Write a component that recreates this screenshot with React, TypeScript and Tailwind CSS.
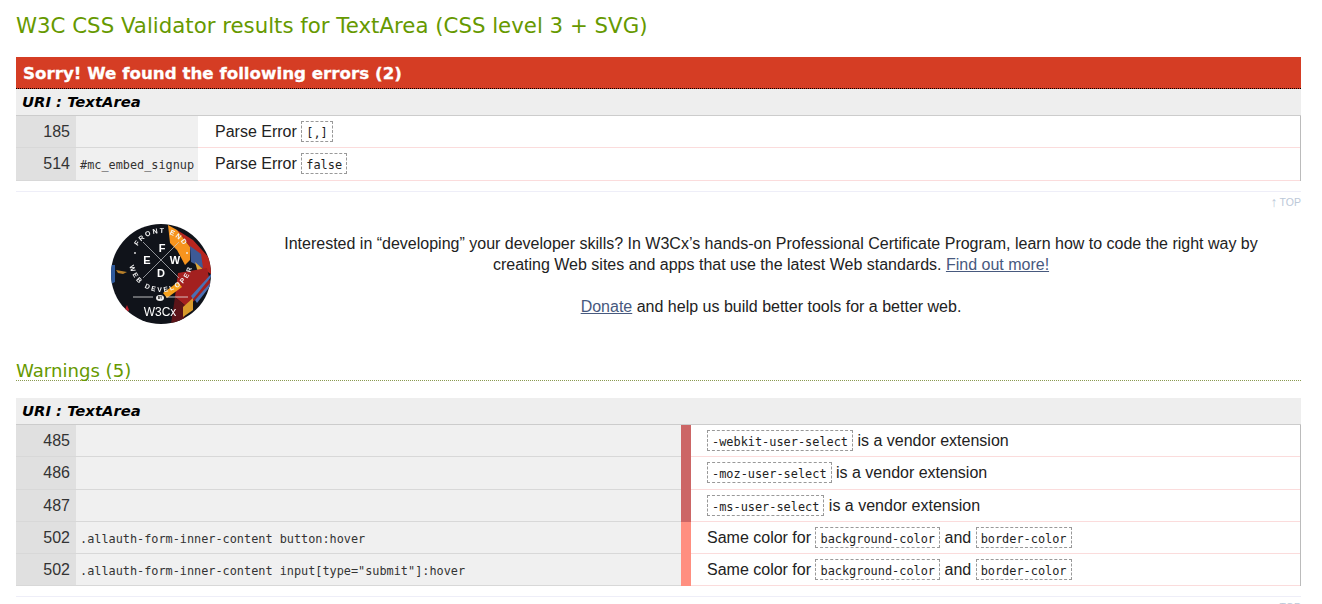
import React from "react";

const sans = "font-['Liberation_Sans',Arial,sans-serif]";
const verdana = "font-['DejaVu_Sans',Verdana,sans-serif]";
const mono = "font-['DejaVu_Sans_Mono',monospace]";

function Code({ children }: { children: React.ReactNode }) {
    return (
        <span className={`${mono} inline-block h-[21px] border border-dashed border-[#999] px-[4px] text-[11.9px] leading-[22px] text-[#222] align-[0px]`}>
            {children}
        </span>
    );
}

function UriRow() {
    return (
        <div className={`${verdana} h-[27px] border-b border-[#ccc] bg-[#eee] pl-[6px] text-[14.8px] leading-[26px] font-bold italic text-black`}>
            URI : TextArea
        </div>
    );
}

function Row({
    line,
    context,
    contextWidth,
    level,
    tall,
    children,
}: {
    line: string;
    context?: string;
    contextWidth: string;
    level?: string;
    tall?: boolean;
    children: React.ReactNode;
}) {
    return (
        <div className={`${tall ? "h-[33px]" : "h-[32px]"} flex border-r border-r-[#bbb]`}>
            <div className="w-[60px] shrink-0 border-b border-[#d8d8d8] bg-[#e0e0e0] pr-[6px] text-right text-[16px] leading-[32px] text-[#333]">
                {line}
            </div>
            <div className={`${contextWidth} ${mono} shrink-0 border-b border-[#d8d8d8] bg-[#f0f0f0] pl-[4px] text-[11.85px] leading-[34px] whitespace-nowrap text-[#333]`}>
                {context}
            </div>
            {level && <div className={`${level} w-[10px] shrink-0`} />}
            <div className={`${level ? "pl-[16px]" : "pl-[17px]"} min-w-0 flex-1 border-b border-[#fbdcdc] text-[16px] leading-[32px] whitespace-nowrap text-[#222]`}>
                {children}
            </div>
        </div>
    );
}

function TopLink() {
    return (
        <div className="mt-[3px] flex h-[14px] items-center justify-end gap-[2px] text-[10.5px] leading-[14px] text-[#bcc8d8]">
            <span className="text-[14px]">↑</span>
            <span>TOP</span>
        </div>
    );
}

function Logo() {
    const letters = "'Liberation Sans',sans-serif";
    return (
        <svg width="100" height="100" viewBox="0 0 100 100" className="shrink-0 blur-[0.4px]">
            <defs>
                <clipPath id="disc">
                    <circle cx="50" cy="50" r="50" />
                </clipPath>
                <path id="arcTop" d="M23 36 A27 27 0 0 1 77 36" fill="none" />
                <path id="arcBot" d="M18 36 A32 32 0 0 0 82 36" fill="none" />
            </defs>
            <g clipPath="url(#disc)">
                <rect width="100" height="100" fill="#10131a" />
                <polygon points="66,6 82,16 100,36 100,50 84,40 79,23" fill="#b7261f" />
                <polygon points="57,1 66,6 79,23 79,36 74,41 66,26 59,19" fill="#f7941e" />
                <polygon points="79,22 90,30 92,44 80,38" fill="#3d5a96" />
                <polygon points="84,38 95,48 88,52" fill="#dca83a" />
                <polygon points="67,49 96,44 100,62 76,83 64,73" fill="#a3201f" />
                <polygon points="52,69 67,58 71,63 56,74" fill="#f7a11c" />
                <polygon points="64,73 76,83 72,100 60,100" fill="#5c1418" />
                <polygon points="72,83 82,74 82,86 72,93" fill="#d99a2b" />
                <polygon points="80,72 100,50 100,53 82,75" fill="#4a70b4" />
                <polygon points="84,76 100,58 100,61 86,79" fill="#4a70b4" />
                <polygon points="0,41 4,41 4,58 0,60" fill="#2f5a9c" />
                <polygon points="5,46 16,48 12,50 7,49" fill="#b9802a" />
                <polygon points="16,81 18,86 14,93 13,88" fill="#b81f2a" />
                <line x1="32" y1="18" x2="68" y2="54" stroke="#c8cbd0" strokeWidth="0.7" />
                <line x1="68" y1="18" x2="32" y2="54" stroke="#c8cbd0" strokeWidth="0.7" />
                <line x1="22" y1="73" x2="42" y2="73" stroke="#e8e8e8" strokeWidth="0.8" />
                <line x1="55" y1="73" x2="77" y2="73" stroke="#e8e8e8" strokeWidth="0.8" />
                <ellipse cx="49" cy="74" rx="4" ry="3" fill="#eee" />
                <text x="49" y="75.3" textAnchor="middle" fontSize="3.4" fontWeight="700" fill="#111" fontFamily={letters}>BY</text>
                <circle cx="24" cy="29" r="0.9" fill="#eee" />
                <circle cx="76" cy="29" r="0.9" fill="#eee" />
                <text fontSize="7" fontWeight="700" fill="#f4f4f4" fontFamily={letters} letterSpacing="1.7" textAnchor="middle">
                    <textPath href="#arcTop" startOffset="50%">FRONT END</textPath>
                </text>
                <text fontSize="6.8" fontWeight="700" fill="#f4f4f4" fontFamily={letters} letterSpacing="2.2" textAnchor="middle">
                    <textPath href="#arcBot" startOffset="50%">WEB DEVELOPER</textPath>
                </text>
                <g fontFamily={letters} fontWeight="700" fontSize="11" fill="#fff" textAnchor="middle">
                    <text x="51" y="28">F</text>
                    <text x="36" y="40">E</text>
                    <text x="64" y="40">W</text>
                    <text x="50" y="53">D</text>
                </g>
                <text x="49" y="92" textAnchor="middle" fontSize="12" fill="#fff" fontFamily={letters}>W3Cx</text>
            </g>
        </svg>
    );
}

function App() {
    return (
        <div className={`${sans} h-[604px] w-[1322px] overflow-hidden bg-white pr-[21px] pl-[16px]`}>
            <h2 className={`${verdana} h-[57px] pt-[11px] text-[21.3px] leading-[30px] whitespace-nowrap text-[#669900]`}>
                W3C CSS Validator results for TextArea (CSS level 3 + SVG)
            </h2>

            <div className={`${verdana} h-[32px] border-b border-dotted border-black bg-[#d53d24] pl-[7px] text-[16.7px] leading-[33px] font-bold text-white [-webkit-text-stroke:0.3px_white]`}>
                Sorry! We found the following errors (2)
            </div>
            <UriRow />
            <Row line="185" contextWidth="w-[122px]">
                Parse Error <Code>[,]</Code>
            </Row>
            <Row line="514" context="#mc_embed_signup" contextWidth="w-[122px]" tall>
                Parse Error <Code>false</Code>
            </Row>

            <div className="mt-[10px] border-t border-[#eeeef8]" />
            <TopLink />

            <div className="mt-[15px] flex h-[100px]">
                <div className="w-[95px] shrink-0" />
                <Logo />
                <div className="ml-[60px] w-[1000px] pt-[9px] text-center text-[16px] leading-[21px] text-[#222]">
                    <p>
                        Interested in “developing” your developer skills? In W3Cx’s hands-on Professional Certificate Program, learn how to code the right way by creating Web sites and apps that use the latest Web standards.{" "}
                        <a className="text-[#47597e] underline">Find out more!</a>
                    </p>
                    <p className="mt-[21px]">
                        <a className="text-[#47597e] underline">Donate</a> and help us build better tools for a better web.
                    </p>
                </div>
            </div>

            <h3 className={`${verdana} mt-[33px] h-[24px] border-b border-dotted border-[#8a9a50] text-[18.1px] leading-[28px] text-[#669900]`}>
                Warnings (5)
            </h3>
            <div className="h-[17px]" />
            <UriRow />
            <Row line="485" contextWidth="w-[605px]" level="bg-[#cc6666]">
                <Code>-webkit-user-select</Code> is a vendor extension
            </Row>
            <Row line="486" contextWidth="w-[605px]" level="bg-[#cc6666]" tall>
                <Code>-moz-user-select</Code> is a vendor extension
            </Row>
            <Row line="487" contextWidth="w-[605px]" level="bg-[#cc6666]">
                <Code>-ms-user-select</Code> is a vendor extension
            </Row>
            <Row line="502" context=".allauth-form-inner-content button:hover" contextWidth="w-[605px]" level="bg-[#ff8f80]">
                Same color for <Code>background-color</Code> and <Code>border-color</Code>
            </Row>
            <Row line="502" context={'.allauth-form-inner-content input[type="submit"]:hover'} contextWidth="w-[605px]" level="bg-[#ff8f80]">
                Same color for <Code>background-color</Code> and <Code>border-color</Code>
            </Row>

            <div className="mt-[10px] border-t border-[#eeeef8]" />
            <TopLink />
        </div>
    );
}

export default App;
